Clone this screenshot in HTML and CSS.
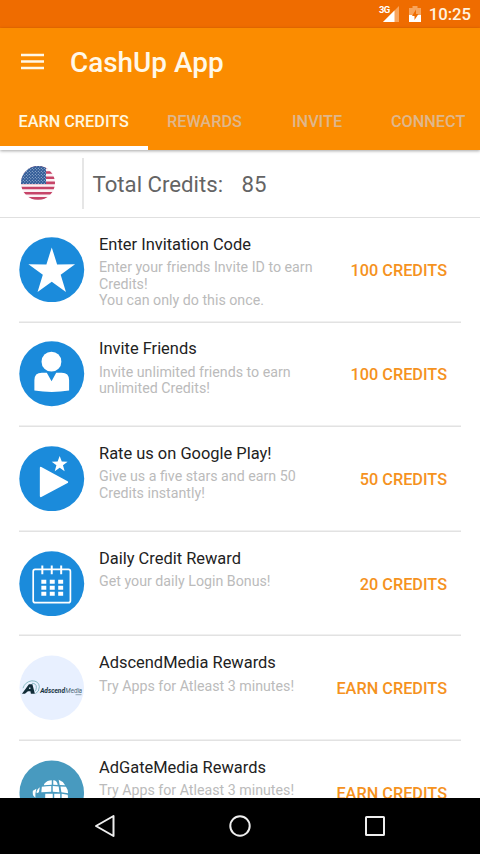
FILE: index.html
```html
<!DOCTYPE html>
<html lang="en">
<head>
<meta charset="utf-8">
<title>CashUp App</title>
<link rel="stylesheet" href="styles.css">
</head>
<body>
<div class="screen">
  <div class="status">
    <svg class="signal" viewBox="0 0 21 18" width="21" height="18"><path d="M20 1v16H4z" fill="#f8a45c"/><path d="M15.500 5.500V17H4z" fill="#fff"/><text x="0" y="8" class="net">3G</text></svg>
    <svg class="battery" viewBox="0 0 12 18" width="12" height="18"><path d="M3.500 1h5v2H12v7H0V3h3.500z" fill="#f8a45c"/><path d="M0 10h12v7H0z" fill="#fff"/><path d="M7 4.500L3 11h2.500v4L9.500 9H7z" fill="#ef6c00"/></svg>
    <span class="clock">10:25</span>
  </div>
  <header class="appbar">
    <div class="toolbar">
      <svg class="menu" viewBox="0 0 23 17" width="23" height="17"><path d="M0 2h23M0 8.500h23M0 15h23" stroke="#fff8e8" stroke-width="2.400"/></svg>
      <h1>CashUp App</h1>
    </div>
    <nav class="tabs">
      <span class="tab active">EARN CREDITS</span><span class="tab rewards">REWARDS</span><span class="tab invite">INVITE</span><span class="tab connect">CONNECT</span>
    </nav>
  </header>
  <section class="total">
    <svg class="flag" viewBox="0 0 34 34" width="34" height="34">
      <defs><clipPath id="round"><circle cx="17" cy="17" r="17"/></clipPath>
      <pattern id="stars" width="3" height="3" patternUnits="userSpaceOnUse"><circle cx=".8" cy=".8" r=".55" fill="#c5d5e8"/><circle cx="2.300" cy="2.300" r=".55" fill="#c5d5e8"/></pattern></defs>
      <g clip-path="url(#round)"><path d="M0 0h34v34H0z" fill="#fbf3f5"/><path d="M0 1.500h34M0 6.700h34M0 11.900h34M0 17.100h34" class="stripe" transform="translate(0 -.2)"/><path d="M0 22h34M0 27.200h34M0 32.400h34" class="stripe"/><path d="M0 0h25v18H0z" fill="#305a96"/><path d="M0 0h25v18H0z" fill="url(#stars)"/></g>
    </svg>
    <div class="sum"><span>Total Credits:</span><span class="amount">85</span></div>
  </section>
  <main class="list">
    <article class="row">
      <svg class="icon" viewBox="0 0 66 66"><circle cx="33" cy="33" r="32.700" fill="#1b8bdb"/><path d="M33 10.500l5.400 17.100 18.100-.1-14.500 10.600 5.300 17.400L33 45.100 18.700 55.500 24 38.100 9.500 27.500l18.100.1z" fill="#fff"/></svg>
      <div class="copy"><h2>Enter Invitation Code</h2><p>Enter your friends Invite ID to earn<br>Credits!<br>You can only do this once.</p></div>
      <span class="pay">100 CREDITS</span>
    </article>
    <article class="row">
      <svg class="icon" viewBox="0 0 66 66"><circle cx="33" cy="33" r="32.700" fill="#1b8bdb"/><circle cx="32.700" cy="20.800" r="10" fill="#fff"/><path d="M28 32l4.800 8.500L37.500 32H43q7.500 0 7.500 7.500V50q-17.500 2.600-35 0V39.500Q15.500 32 23 32z" fill="#fff"/></svg>
      <div class="copy"><h2>Invite Friends</h2><p>Invite unlimited friends to earn<br>unlimited Credits!</p></div>
      <span class="pay">100 CREDITS</span>
    </article>
    <article class="row">
      <svg class="icon" viewBox="0 0 66 66"><circle cx="33" cy="33" r="32.700" fill="#1b8bdb"/><path d="M22 22L48.500 36.500 22 50.500z" fill="#fff" stroke="#fff" stroke-width="2" stroke-linejoin="round"/><path d="M41 10l2.100 5.600 5.900.2-4.700 3.600 1.700 6-5-3.400-5 3.400 1.700-6-4.700-3.600 5.900-.2z" fill="#fff"/></svg>
      <div class="copy"><h2>Rate us on Google Play!</h2><p>Give us a five stars and earn 50<br>Credits instantly!</p></div>
      <span class="pay">50 CREDITS</span>
    </article>
    <article class="row">
      <svg class="icon" viewBox="0 0 66 66"><circle cx="33" cy="33" r="32.700" fill="#1b8bdb"/><rect x="14.300" y="18.600" width="37.500" height="33.500" rx="2" fill="none" stroke="#fff" stroke-width="1.700"/><path d="M23.500 14.500v9M33 14.500v9M42.500 14.500v9" stroke="#fff" stroke-width="2"/><path d="M22.500 31h22M22.500 37h22M22.500 43h22" stroke="#fff" stroke-width="4" stroke-dasharray="5 3.500"/></svg>
      <div class="copy"><h2>Daily Credit Reward</h2><p>Get your daily Login Bonus!</p></div>
      <span class="pay">20 CREDITS</span>
    </article>
    <article class="row">
      <svg class="icon" viewBox="0 0 66 66"><circle cx="33" cy="33" r="32.500" fill="#e8f0ff"/><path d="M3 39L10 29.500h3.500L16 39h-4l-.5-2.500H9L6 39zM10 34.300h1.600l-.5-2.500z" fill="#102c38" fill-rule="evenodd"/><path d="M4 33.500Q6 27 13 26q7 0 7.500 6 0 5-4 7M13 28.500q4.500 0 4.500 4 0 2.500-1.500 4" fill="none" stroke="#6cacb2" stroke-width=".8"/><text x="21.300" y="38" class="brand" textLength="25" lengthAdjust="spacingAndGlyphs">Adscend</text><text x="46.700" y="38" class="brand media" textLength="17" lengthAdjust="spacingAndGlyphs">Media</text><path d="M57 40h6" stroke="#78909e" stroke-width=".8"/></svg>
      <div class="copy"><h2>AdscendMedia Rewards</h2><p>Try Apps for Atleast 3 minutes!</p></div>
      <span class="pay">EARN CREDITS</span>
    </article>
    <article class="row">
      <svg class="icon" viewBox="0 0 66 66"><circle cx="33" cy="33" r="32.500" fill="#489abf"/><path d="M25.500 24q3-3.500 7.500-3.500V25q-4 0-8 .5zM34.500 20.500q4 0 4.500 4.800l-4.500-.3zM40 20q4.500 1.500 6.500 5.500l-5.500-.2zM23 27q5-.7 9.500-.7V32l-10 .5zM34 26.300l6 .3.700 5.800-6.700-.4zM41.800 26.700l5.500.3q2.200 3 2.200 6.500l-6.800-1zM21 27.500l-1 5-2 1q-1.500-3 3-6zM14 31l3.500-2-1 5v4l-2-2q-1-2-.5-5zM26.500 34H34v14h-6q-2-6-1.500-14zM35.500 34h6v8h-6zM43 34l6 1q1 3-1 7l-5-2z" fill="#fff"/></svg>
      <div class="copy"><h2>AdGateMedia Rewards</h2><p>Try Apps for Atleast 3 minutes!</p></div>
      <span class="pay">EARN CREDITS</span>
    </article>
  </main>
  <footer class="navbar">
    <svg viewBox="0 0 24 24" width="24" height="24"><path d="M20.500 2v20L3 12z"/></svg>
    <svg viewBox="0 0 24 24" width="24" height="24"><circle cx="12" cy="12" r="9.700"/></svg>
    <svg viewBox="0 0 24 24" width="24" height="24"><rect x="3" y="3" width="18" height="18" rx=".5"/></svg>
  </footer>
</div>
</body>
</html>
```

FILE: styles.css
```css
* { box-sizing: border-box; }
body { margin: 0; font-family: Roboto, sans-serif; background: #fff; }
h1, h2, p { margin: 0; }
.screen { width: 480px; height: 854px; display: flex; flex-direction: column; overflow: hidden; }
.status { height: 28px; flex: none; background: #ef6c00; display: flex; align-items: center; justify-content: flex-end; padding-right: 9px; color: #fff3e0; }
.signal { margin-right: 9px; overflow: visible; }
.battery { margin-right: 8px; }
.net { font: 700 9.500px Roboto, sans-serif; fill: #fff; letter-spacing: -.8px; }
.clock { font-size: 16.700px; font-weight: 500; line-height: 28px; padding-top: 2px; }
.appbar { height: 121.500px; flex: none; background: #fb8c00; box-shadow: 0 1px 3px rgba(0,0,0,.35); z-index: 1; display: flex; flex-direction: column; }
.toolbar { height: 67px; flex: none; display: flex; align-items: center; padding-left: 21px; }
h1 { margin-left: 26px; padding-top: 2px; font-size: 27.900px; font-weight: 500; line-height: 32px; color: #fff8e8; }
.menu { margin-bottom: 1px; }
.tabs { height: 54.500px; flex: none; display: flex; font-size: 16.250px; font-weight: 500; line-height: 54px; color: #dfb78c; white-space: nowrap; }
.tab { flex: none; }
.active { width: 148px; padding-left: 18.500px; color: #fff8e0; box-shadow: inset 0 -4px #fff; }
.rewards { width: 144px; padding-left: 19px; }
.invite { width: 99px; }
.total { height: 68.500px; flex: none; display: flex; align-items: center; border-bottom: 1.500px solid #e0e0e0; padding-left: 20.500px; }
.stripe { stroke: #c64468; stroke-width: 2.600; }
.sum { margin-left: 27.500px; height: 51px; border-left: 2px solid #e6e6e6; padding: 2px 0 0 8.500px; display: flex; align-items: center; font-size: 22.200px; color: #646464; gap: 18.500px; }
.list { flex: 1; min-height: 0; overflow: hidden; padding: 0 19px; }
.row { height: 104.600px; box-shadow: inset 0 -1.500px #e2e2e2; display: flex; align-items: center; padding: 0 14px 1.500px 0; }
.icon { width: 65.500px; height: 65.500px; flex: none; }
.copy { align-self: flex-start; flex: 1; padding: 16.900px 0 0 14.500px; white-space: nowrap; }
h2 { font-size: 16.450px; font-weight: 400; line-height: 20px; color: #222; }
p { margin-top: 4.400px; font-size: 14.220px; line-height: 16.500px; color: #bbb; }
.pay { font-size: 16.300px; font-weight: 500; color: #f5921e; padding-top: 1.500px; }
.brand { font: italic 700 7px Roboto, sans-serif; fill: #16323e; }
.media { font-weight: 400; fill: #4c6672; }
.navbar { height: 56px; flex: none; background: #000; display: flex; align-items: center; justify-content: center; gap: 111px; }
.navbar svg { fill: none; stroke: #eee; stroke-width: 2; stroke-linejoin: round; }
```
